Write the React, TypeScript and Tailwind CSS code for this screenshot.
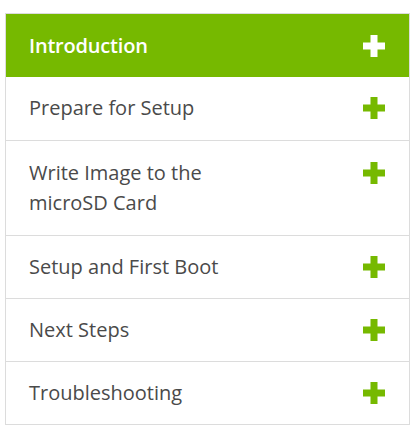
const items = [
  { label: "Prepare for Setup", pad: "py-[16px]" },
  { label: "Write Image to the microSD Card", pad: "py-[17px]" },
  { label: "Setup and First Boot", pad: "py-[16px]" },
  { label: "Next Steps", pad: "py-[16px]" },
  { label: "Troubleshooting", pad: "py-[16px]" },
];

function Plus({ color }: { color: string }) {
  return (
    <svg width="22" height="22" viewBox="0 0 22 22" className="shrink-0">
      <rect x="7.5" y="0" width="7" height="22" fill={color} />
      <rect x="0" y="7.5" width="22" height="7" fill={color} />
    </svg>
  );
}

export default function App() {
  return (
    <div className="w-[420px] h-[440px] bg-white pt-[13px] pl-[5px] font-['Open_Sans',sans-serif]">
      <div className="w-[405px] border border-[#dcdcdc]">
        <div className="h-[63px] bg-[#76b900] flex items-center justify-between pl-[23px] pr-[24px]">
          <span className="text-white text-[20px] font-semibold tracking-[-0.2px]">Introduction</span>
          <Plus color="#ffffff" />
        </div>
        {items.map((item, i) => (
          <div
            key={item.label}
            className={`flex items-start justify-between pl-[23px] pr-[24px] ${item.pad} ${
              i === 0 ? "min-h-[63px]" : "border-t border-[#dcdcdc]"
            }`}
          >
            <span className="w-[230px] text-[20px] leading-[30px] text-[#4a4a4a]">{item.label}</span>
            <div className="h-[30px] flex items-center">
              <Plus color="#76b900" />
            </div>
          </div>
        ))}
      </div>
    </div>
  );
}
